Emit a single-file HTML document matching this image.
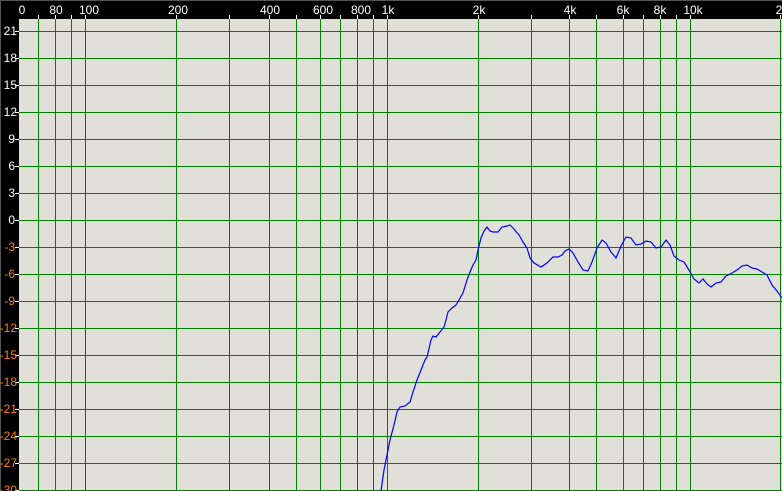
<!DOCTYPE html>
<html><head><style>
html,body{margin:0;padding:0;background:#000;}
body{width:782px;height:491px;overflow:hidden;position:relative;font-family:"Liberation Sans",sans-serif;}
</style></head><body>
<svg width="782" height="491" xmlns="http://www.w3.org/2000/svg" style="position:absolute;left:0;top:0">
<rect x="0" y="0" width="782" height="491" fill="#000"/>
<rect x="0" y="0" width="782" height="1" fill="#555"/>
<rect x="0" y="0" width="1" height="491" fill="#555"/>
<rect x="19" y="19" width="763" height="472" fill="#e0e0d8"/>
<g stroke="#008000" stroke-width="1" shape-rendering="crispEdges">
<line x1="19" x2="782" y1="31.5" y2="31.5"/><line x1="19" x2="782" y1="58.5" y2="58.5"/><line x1="19" x2="782" y1="85.5" y2="85.5"/><line x1="19" x2="782" y1="112.5" y2="112.5"/><line x1="19" x2="782" y1="139.5" y2="139.5"/><line x1="19" x2="782" y1="166.5" y2="166.5"/><line x1="19" x2="782" y1="193.5" y2="193.5"/><line x1="19" x2="782" y1="220.5" y2="220.5"/><line x1="19" x2="782" y1="247.5" y2="247.5"/><line x1="19" x2="782" y1="274.5" y2="274.5"/><line x1="19" x2="782" y1="301.5" y2="301.5"/><line x1="19" x2="782" y1="328.5" y2="328.5"/><line x1="19" x2="782" y1="355.5" y2="355.5"/><line x1="19" x2="782" y1="382.5" y2="382.5"/><line x1="19" x2="782" y1="409.5" y2="409.5"/><line x1="19" x2="782" y1="436.5" y2="436.5"/><line x1="19" x2="782" y1="463.5" y2="463.5"/><line x1="19" x2="782" y1="490.5" y2="490.5"/>
<line y1="19" y2="491" x1="38.5" x2="38.5"/><line y1="19" y2="491" x1="55.5" x2="55.5"/><line y1="19" y2="491" x1="71.5" x2="71.5"/><line y1="19" y2="491" x1="85.5" x2="85.5"/><line y1="19" y2="491" x1="176.5" x2="176.5"/><line y1="19" y2="491" x1="229.5" x2="229.5"/><line y1="19" y2="491" x1="269.5" x2="269.5"/><line y1="19" y2="491" x1="296.5" x2="296.5"/><line y1="19" y2="491" x1="320.5" x2="320.5"/><line y1="19" y2="491" x1="340.5" x2="340.5"/><line y1="19" y2="491" x1="357.5" x2="357.5"/><line y1="19" y2="491" x1="373.5" x2="373.5"/><line y1="19" y2="491" x1="387.5" x2="387.5"/><line y1="19" y2="491" x1="478.5" x2="478.5"/><line y1="19" y2="491" x1="531.5" x2="531.5"/><line y1="19" y2="491" x1="569.5" x2="569.5"/><line y1="19" y2="491" x1="596.5" x2="596.5"/><line y1="19" y2="491" x1="623.5" x2="623.5"/><line y1="19" y2="491" x1="643.5" x2="643.5"/><line y1="19" y2="491" x1="660.5" x2="660.5"/><line y1="19" y2="491" x1="676.5" x2="676.5"/><line y1="19" y2="491" x1="690.5" x2="690.5"/><line y1="19" y2="491" x1="780.5" x2="780.5"/>
</g>
<g stroke="#fff" stroke-width="1" shape-rendering="crispEdges">
<line y1="15" y2="19" x1="38.5" x2="38.5"/><line y1="15" y2="19" x1="55.5" x2="55.5"/><line y1="15" y2="19" x1="71.5" x2="71.5"/><line y1="15" y2="19" x1="85.5" x2="85.5"/><line y1="15" y2="19" x1="176.5" x2="176.5"/><line y1="15" y2="19" x1="229.5" x2="229.5"/><line y1="15" y2="19" x1="269.5" x2="269.5"/><line y1="15" y2="19" x1="296.5" x2="296.5"/><line y1="15" y2="19" x1="320.5" x2="320.5"/><line y1="15" y2="19" x1="340.5" x2="340.5"/><line y1="15" y2="19" x1="357.5" x2="357.5"/><line y1="15" y2="19" x1="373.5" x2="373.5"/><line y1="15" y2="19" x1="387.5" x2="387.5"/><line y1="15" y2="19" x1="478.5" x2="478.5"/><line y1="15" y2="19" x1="531.5" x2="531.5"/><line y1="15" y2="19" x1="569.5" x2="569.5"/><line y1="15" y2="19" x1="596.5" x2="596.5"/><line y1="15" y2="19" x1="623.5" x2="623.5"/><line y1="15" y2="19" x1="643.5" x2="643.5"/><line y1="15" y2="19" x1="660.5" x2="660.5"/><line y1="15" y2="19" x1="676.5" x2="676.5"/><line y1="15" y2="19" x1="690.5" x2="690.5"/><line y1="15" y2="19" x1="780.5" x2="780.5"/>
<line x1="15" x2="19" y1="31.5" y2="31.5"/><line x1="15" x2="19" y1="58.5" y2="58.5"/><line x1="15" x2="19" y1="85.5" y2="85.5"/><line x1="15" x2="19" y1="112.5" y2="112.5"/><line x1="15" x2="19" y1="139.5" y2="139.5"/><line x1="15" x2="19" y1="166.5" y2="166.5"/><line x1="15" x2="19" y1="193.5" y2="193.5"/><line x1="15" x2="19" y1="220.5" y2="220.5"/><line x1="15" x2="19" y1="247.5" y2="247.5"/><line x1="15" x2="19" y1="274.5" y2="274.5"/><line x1="15" x2="19" y1="301.5" y2="301.5"/><line x1="15" x2="19" y1="328.5" y2="328.5"/><line x1="15" x2="19" y1="355.5" y2="355.5"/><line x1="15" x2="19" y1="382.5" y2="382.5"/><line x1="15" x2="19" y1="409.5" y2="409.5"/><line x1="15" x2="19" y1="436.5" y2="436.5"/><line x1="15" x2="19" y1="463.5" y2="463.5"/><line x1="15" x2="19" y1="490.5" y2="490.5"/>
</g>
<g fill="#fff" font-size="12" font-family="Liberation Sans, sans-serif" text-anchor="middle">
<text x="22" y="14">0</text><text x="56" y="14">80</text><text x="89" y="14">100</text><text x="178" y="14">200</text><text x="270" y="14">400</text><text x="323" y="14">600</text><text x="361" y="14">800</text><text x="388" y="14">1k</text><text x="479" y="14">2k</text><text x="570" y="14">4k</text><text x="623" y="14">6k</text><text x="660" y="14">8k</text><text x="693" y="14">10k</text><text x="779" y="14">2</text>
</g>
<g font-size="12" font-family="Liberation Sans, sans-serif" text-anchor="end">
<g fill="#fff">
<text x="17" y="35">21</text><text x="17" y="62">18</text><text x="17" y="89">15</text><text x="17" y="116">12</text><text x="15" y="143">9</text><text x="15" y="170">6</text><text x="15" y="197">3</text><text x="15" y="224">0</text>
</g>
<g fill="#ff8000">
<text x="15" y="251">-3</text><text x="15" y="278">-6</text><text x="15" y="305">-9</text><text x="17" y="332">-12</text><text x="17" y="359">-15</text><text x="17" y="386">-18</text><text x="17" y="413">-21</text><text x="17" y="440">-24</text><text x="17" y="467">-27</text><text x="17" y="494">-30</text>
</g></g>
<polyline fill="none" stroke="#0000ff" stroke-width="1.2" points="381,491 384,470 387,455 390,440 394,425 397,412 400,407 405,406 410,402 413,392 417,380 421,370 425,360 427,357 428,353 431,340 433,336 436,337 440,332 444,327 446,320 448,312 452,308 456,305 459,300 463,293 467,280 470,272 473,265 476,260 478,250 481,238 484,231 487,227 490,231 493,232 498,232 502,227 507,226 510,225 513,228 519,235 523,242 527,248 530,258 534,263 541,267 547,263 553,257 558,257 562,255 565,251 569,249 573,253 578,262 583,270 588,271 592,262 597,248 602,240 606,243 611,252 616,258 621,246 626,237 631,238 636,245 641,244 646,241 651,242 656,248 661,247 666,240 670,245 674,256 679,260 684,262 689,270 694,279 699,283 703,279 707,284 711,287 716,283 721,282 726,276 732,273 737,270 742,266 747,265 752,268 757,269 762,272 767,275 772,285 777,291 782,298"/>
</svg>
</body></html>
